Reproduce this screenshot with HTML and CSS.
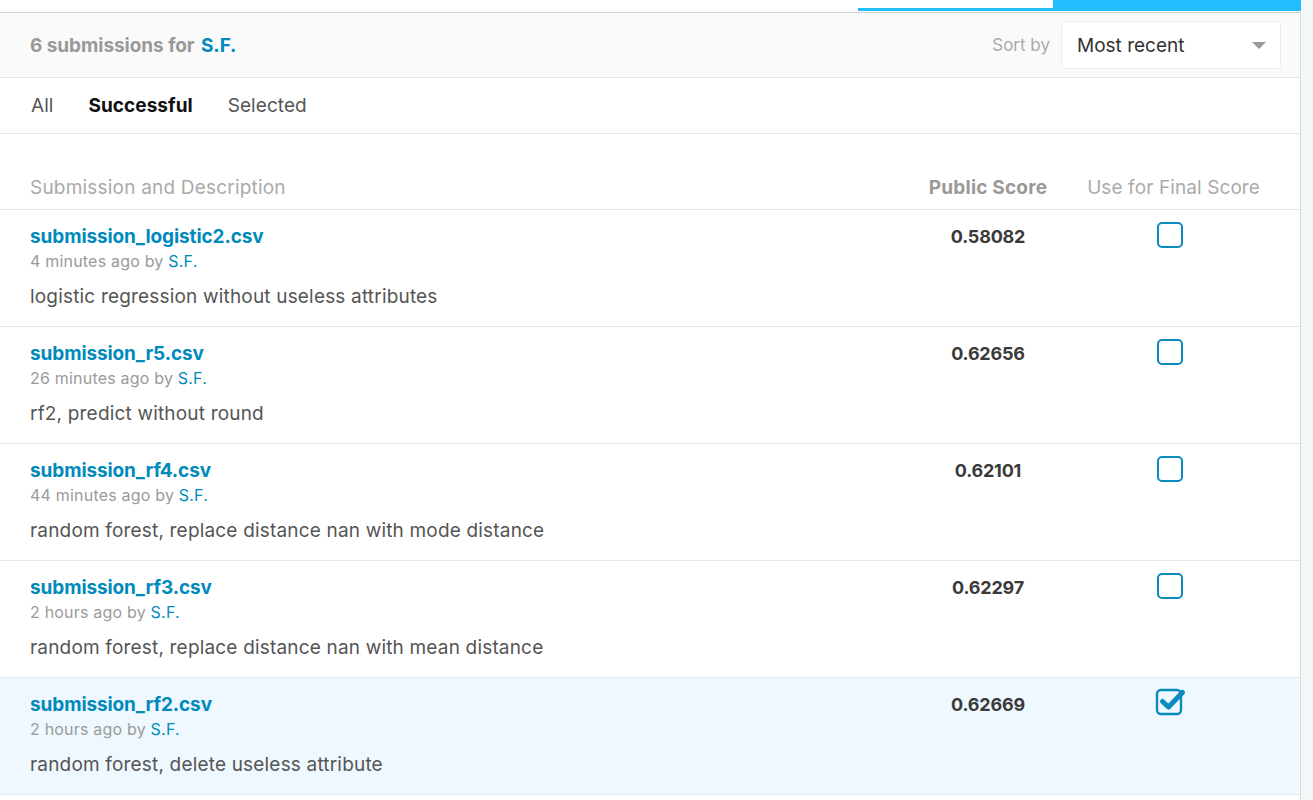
FILE: index.html
```html
<!DOCTYPE html>
<html>
<head>
<meta charset="utf-8">
<link rel="stylesheet" href="styles.css">
</head>
<body>
<div class="page">
  <div class="topstrip">
    <div class="tab-ind thin"></div>
    <div class="tab-ind full"></div>
  </div>
  <div class="panel">
    <div class="panel-head">
      <div class="count">6 submissions for <a class="link">S.F.</a></div>
      <div class="sort">
        <span class="sort-label">Sort by</span>
        <div class="select">
          <span>Most recent</span>
          <span class="caret"></span>
        </div>
      </div>
    </div>
    <div class="tabs">
      <span class="tab">All</span>
      <span class="tab active">Successful</span>
      <span class="tab">Selected</span>
    </div>
    <div class="table">
      <div class="row head">
        <div class="c-desc">Submission and Description</div>
        <div class="c-score bold">Public Score</div>
        <div class="c-use">Use for Final Score</div>
      </div>

      <div class="row">
        <div class="c-desc">
          <div class="fname">submission_logistic2.csv</div>
          <div class="meta">4 minutes ago by <span class="link">S.F.</span></div>
          <div class="desc">logistic regression without useless attributes</div>
        </div>
        <div class="c-score score">0.58082</div>
        <div class="c-use"><span class="box"></span></div>
      </div>

      <div class="row">
        <div class="c-desc">
          <div class="fname">submission_r5.csv</div>
          <div class="meta">26 minutes ago by <span class="link">S.F.</span></div>
          <div class="desc">rf2, predict without round</div>
        </div>
        <div class="c-score score">0.62656</div>
        <div class="c-use"><span class="box"></span></div>
      </div>

      <div class="row">
        <div class="c-desc">
          <div class="fname">submission_rf4.csv</div>
          <div class="meta">44 minutes ago by <span class="link">S.F.</span></div>
          <div class="desc">random forest, replace distance nan with mode distance</div>
        </div>
        <div class="c-score score">0.62101</div>
        <div class="c-use"><span class="box"></span></div>
      </div>

      <div class="row">
        <div class="c-desc">
          <div class="fname">submission_rf3.csv</div>
          <div class="meta">2 hours ago by <span class="link">S.F.</span></div>
          <div class="desc">random forest, replace distance nan with mean distance</div>
        </div>
        <div class="c-score score">0.62297</div>
        <div class="c-use"><span class="box"></span></div>
      </div>

      <div class="row selected">
        <div class="c-desc">
          <div class="fname">submission_rf2.csv</div>
          <div class="meta">2 hours ago by <span class="link">S.F.</span></div>
          <div class="desc">random forest, delete useless attribute</div>
        </div>
        <div class="c-score score">0.62669</div>
        <div class="c-use">
          <svg class="checked" width="32" height="30" viewBox="0 0 32 30">
            <rect x="2" y="4" width="24" height="24" rx="4" fill="none" stroke="#0b8abd" stroke-width="2.4"/>
            <path d="M7.5 15.5 L13.5 21 L27.5 6.5" fill="none" stroke="#0b8abd" stroke-width="5" stroke-linecap="round" stroke-linejoin="round"/>
          </svg>
        </div>
      </div>
    </div>
  </div>
</div>
</body>
</html>
```

FILE: styles.css
```css
html, body {
  margin: 0;
  padding: 0;
  background: #f4f7f8;
}
body {
  font-family: Inter, "Liberation Sans", sans-serif;
  color: #333;
  width: 1313px;
  height: 800px;
  overflow: hidden;
}
.page {
  width: 1301px;
  background: #fff;
  min-height: 800px;
}
.topstrip {
  height: 12px;
  display: flex;
  justify-content: flex-end;
  align-items: flex-start;
  background: #fff;
}
.tab-ind { background: #20beff; }
.tab-ind.thin { width: 195px; height: 3px; margin-top: 8px; }
.tab-ind.full { width: 248px; height: 11px; }
.panel {
  border-top: 1px solid #d4d4d4;
  border-right: 1px solid #dcdcdc;
  min-height: 787px;
}
.panel-head {
  height: 64px;
  background: #fafafa;
  border-bottom: 1px solid #e6e6e6;
  display: flex;
  align-items: center;
  justify-content: space-between;
  padding: 0 19px 0 30px;
}
.count {
  font-size: 19px;
  font-weight: 700;
  color: #999;
  letter-spacing: -0.05px;
}
.link { color: #008abc; }
.count .link { margin-left: 2px; }
.sort {
  display: flex;
  align-items: center;
  gap: 11px;
}
.sort-label {
  font-size: 17px;
  color: #aaa;
}
.select {
  width: 220px;
  height: 48px;
  box-sizing: border-box;
  background: #fff;
  border: 1px solid #ececec;
  border-radius: 4px;
  display: flex;
  align-items: center;
  justify-content: space-between;
  padding: 0 14px 0 15px;
  font-size: 19px;
  color: #333;
}
.caret {
  width: 0;
  height: 0;
  border-left: 7px solid transparent;
  border-right: 7px solid transparent;
  border-top: 7px solid #999;
}
.tabs {
  height: 55px;
  border-bottom: 1px solid #e6e6e6;
  display: flex;
  align-items: center;
  gap: 35px;
  padding-left: 31px;
  font-size: 19px;
  letter-spacing: 0.05px;
  color: #555;
}
.tab.active {
  font-weight: 700;
  color: #111;
}
.row {
  display: grid;
  grid-template-columns: 1fr 140px 180px;
  column-gap: 22px;
  padding: 15px 40px 17px 30px;
  border-bottom: 1px solid #e8e8e8;
}
.row.head {
  padding-top: 42px;
  padding-bottom: 9px;
  font-size: 19px;
  letter-spacing: 0.2px;
  color: #aaa;
  line-height: 24px;
}
.row.head .c-use { text-align: right; letter-spacing: 0.1px; }
.row.head .bold { font-weight: 700; color: #999; letter-spacing: 0.2px; }
.c-score { text-align: center; }
.c-use { text-align: center; }
.fname {
  font-size: 19px;
  font-weight: 700;
  color: #008abc;
  line-height: 24px;
  letter-spacing: -0.1px;
}
.meta {
  font-size: 16px;
  color: #9a9a9a;
  line-height: 24px;
  letter-spacing: 0.2px;
}
.desc {
  font-size: 19px;
  color: #555;
  line-height: 24px;
  letter-spacing: 0.18px;
  margin-top: 12px;
}
.score {
  font-size: 18px;
  font-weight: 700;
  color: #3a3a3a;
  line-height: 24px;
  letter-spacing: -0.2px;
}
.box {
  display: inline-block;
  width: 26px;
  height: 26px;
  box-sizing: border-box;
  border: 2px solid #0b8abd;
  border-radius: 5px;
  margin-top: -3px;
}
.row.selected { background: #eef8fe; }
.checked {
  display: inline-block;
  margin-top: -7px;
  margin-left: 2px;
}
```
